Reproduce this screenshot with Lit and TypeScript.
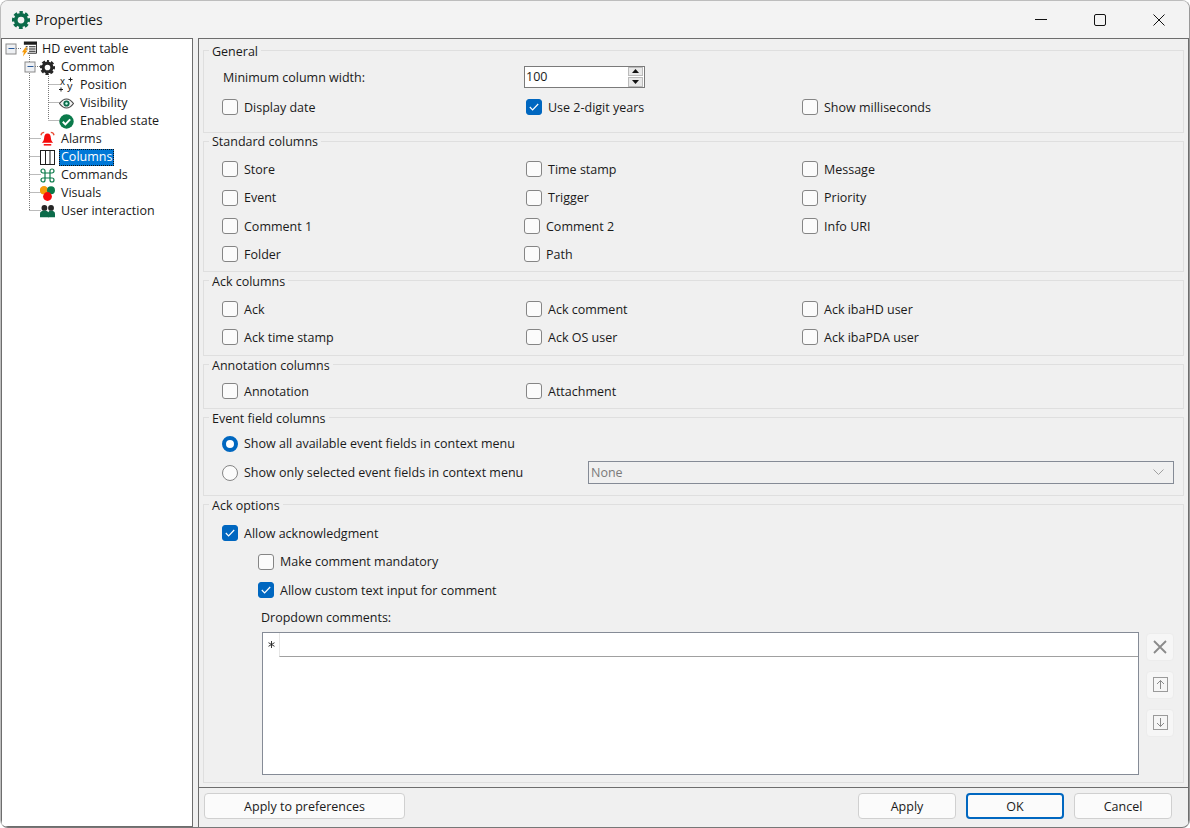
import { LitElement, html, css, svg } from "lit";
import { customElement } from "lit/decorators.js";

const gear = (c: string, s: number) => html`<svg width=${s} height=${s} viewBox="0 0 24 24"><circle cx="12" cy="12" r="10" fill="none" stroke=${c} stroke-width="4" stroke-dasharray="4.8 3.054" stroke-dashoffset="2.400" transform="rotate(-90 12 12)"/><circle cx="12" cy="12" r="7" fill="none" stroke=${c} stroke-width="5"/></svg>`;

const icons: Record<string, unknown> = {
  table: html`<svg width="16" height="16" viewBox="0 0 16 16"><path d="M2 0h14v3.500H2z" fill="#1e1e1e"/><path d="M15.500 3v9.500H6" fill="none" stroke="#1e1e1e"/><path d="M4 5.500h2M7.500 5.500h7M4 8h2M7.500 8h7M7.500 10.500h7" stroke="#1e1e1e" stroke-width="1.100"/><path d="M3.500 6.500 0 11.500h2L1 16l5-6.500H3.800L5.500 6.500z" fill="#f59b0b"/></svg>`,
  gear: gear("#262626", 15),
  pos: html`<svg width="15" height="17" viewBox="0 0 15 17"><text x="1" y="8" font-family="Liberation Sans" font-size="10" fill="#1e1e1e">x</text><text x="8" y="13" font-family="Liberation Sans" font-size="11" fill="#1e1e1e">y</text><path d="M9.500 2.500h4M11.500.5v4M0 12.500h4M2 10.500v4" stroke="#1e1e1e"/></svg>`,
  eye: html`<svg width="15" height="11" viewBox="0 0 15 11"><path d="M.5 5.500C3 2 5 1 7.500 1S12 2 14.500 5.500C12 9 10 10 7.500 10S3 9 .5 5.500z" fill="#f4f4f4" stroke="#4a4a4a" stroke-width="1.200"/><circle cx="7.500" cy="5.500" r="3.100" fill="#0b6b4a"/><circle cx="7.500" cy="5.500" r="1.200" fill="#cfe"/></svg>`,
  ok: html`<svg width="15" height="15" viewBox="0 0 15 15"><circle cx="7.500" cy="7.500" r="7.200" fill="#0b7a4b"/><path d="M3.800 7.800l2.600 2.600 4.800-5" fill="none" stroke="#fff" stroke-width="2"/></svg>`,
  alarm: html`<svg width="16" height="16" viewBox="0 0 16 16"><path d="M8 2c2.600 0 3.400 2.200 3.600 4.800.2 2.200 1 3.600 2.400 5.200H2c1.400-1.600 2.200-3 2.400-5.200C4.600 4.200 5.400 2 8 2z" fill="#f50a0a"/><rect x="4" y="13.400" width="8" height="1.600" fill="#f50a0a"/><path d="M4.500 1C3 1 1.500 2 1 4M11.500 1c1.500 0 3 1 3.500 3" fill="none" stroke="#e8503a" stroke-width="1.400"/></svg>`,
  cols: html`<svg width="15" height="15" viewBox="0 0 15 15"><rect x=".5" y=".5" width="14" height="14" fill="#fff" stroke="#1e1e1e"/><path d="M5.500 .5V14.500M10 .5V14.500" stroke="#1e1e1e"/></svg>`,
  cmd: html`<svg width="15" height="15" viewBox="0 0 15 15"><path d="M5 5h5v5H5zM5 5H3a2 2 0 1 1 2-2zM10 5V3a2 2 0 1 1 2 2zM10 10h2a2 2 0 1 1-2 2zM5 10v2a2 2 0 1 1-2-2z" fill="none" stroke="#0b7a4b" stroke-width="1.200"/></svg>`,
  vis: html`<svg width="15" height="15" viewBox="0 0 15 15"><circle cx="4" cy="4.300" r="4.200" fill="#f59b0b"/><circle cx="11" cy="4.300" r="4" fill="#0b7a4b"/><circle cx="7.500" cy="10.500" r="4.400" fill="#f50a0a"/></svg>`,
  users: html`<svg width="17" height="14" viewBox="0 0 17 14"><circle cx="5" cy="3.500" r="3.300" fill="#262626"/><path d="M0 14V10c0-2 2-3.500 5-3.500S10 8 10 10v4z" fill="#0b6b4a"/><circle cx="12.500" cy="3.500" r="3.300" fill="#262626"/><path d="M9 14V9c1-1.500 2-2.500 3.500-2.500C15 6.500 17 8 17 10v4z" fill="#0b6b4a"/></svg>`,
};

@customElement("app-root")
export class AppRoot extends LitElement {
  static styles = css`
    :host { display: block; width: 1190px; height: 828px; background: #fff; font-family: "Open Sans", "Noto Sans", sans-serif; font-size: 12.5px; color: #1a1a1a; overflow: hidden; }
    * { box-sizing: border-box; }
    .window { width: 1190px; height: 828px; background: #f0f0f0; border: 1px solid #bdbdbd; border-bottom-color: #777; border-right-color: #999; border-radius: 8px; overflow: hidden; display: flex; flex-direction: column; }
    .title { height: 37px; flex: none; display: flex; align-items: center; padding-left: 11px; background: #f3f3f3; }
    .title-text { margin-left: 5px; font-size: 14px; }
    .wbtns { margin-left: auto; display: flex; margin-right: 1px; }
    .wbtn { width: 59px; height: 37px; display: flex; align-items: center; justify-content: center; }
    .body { flex: 1; display: flex; min-height: 0; gap: 5px; }
    .tree { width: 192px; flex: none; background: #fff; border: 1px solid #6d6d6d; position: relative; padding-top: 1px; }
    .tree-lines { position: absolute; left: -2px; top: -39px; pointer-events: none; }
    .row { height: 18px; display: flex; align-items: center; gap: 5px; position: relative; }
    .l0 { padding-left: 20px; }
    .l1 { padding-left: 38px; gap: 6px; }
    .l2 { padding-left: 57px; gap: 6px; }
    .ico { width: 15px; display: flex; justify-content: center; flex: none; }
    .lbl { padding: 0 2px; height: 17px; line-height: 16px; white-space: nowrap; margin-left: -2px; }
    .sel { background: #0078d7; color: #fff; outline: 1px dotted #111; outline-offset: -1px; }
    .panel { flex: 1; display: flex; flex-direction: column; border: 1px solid #6d6d6d; border-bottom: none; min-width: 0; }
    .content { height: 748px; flex: none; padding: 11px 4px 0 4px; display: flex; flex-direction: column; gap: 8px; }
    .group { border: 1px solid #dfdfdf; position: relative; flex: none; }
    .legend { position: absolute; left: 5px; top: -8px; background: #f0f0f0; padding: 0 3px; height: 17px; line-height: 17px; white-space: nowrap; }
    .g1 { height: 83px; padding-top: 12px; }
    .g2 { height: 131px; padding-top: 13px; }
    .g2 .legend { top: -9px; }
    .g3 { height: 76px; padding-top: 14px; }
    .g4 { height: 45px; padding-top: 12px; }
    .g5 { height: 79px; padding-top: 11px; }
    .g6 { height: 279px; padding-top: 14px; }
    .cols { display: grid; grid-template-columns: 304px 276px 1fr; padding-left: 18px; grid-auto-rows: 28px; }
    .g1 .cols { grid-template-rows: 29px 30px; }
    .g2 .cols { grid-template-rows: 28px 29px 28px 28px; }
    .opt { display: flex; align-items: center; gap: 6px; white-space: nowrap; }
    .shift { margin-left: -2px; }
    .cb { width: 16px; height: 16px; flex: none; border: 1px solid #858585; border-radius: 3px; background: #fbfbfb; display: flex; align-items: center; justify-content: center; }
    .cb.on { background: #0067c0; border-color: #0067c0; }
    .rd { width: 16px; height: 16px; flex: none; border: 1px solid #858585; border-radius: 50%; background: #fbfbfb; }
    .rd.on { border: 4.500px solid #0067c0; background: #fff; }
    .min-lbl { padding-left: 1px; white-space: nowrap; display: flex; align-items: center; }
    .spin { width: 121px; height: 22px; background: #fff; border: 1px solid #7a7a7a; display: flex; align-items: center; padding-left: 1px; justify-self: start; align-self: center; margin: 0 0 2px -2px; justify-content: space-between; }
    .arrows { width: 15px; height: 20px; display: flex; flex-direction: column; gap: 1px; margin-right: 1px; }
    .arrow { flex: 1; background: #e8e8e8; border: 1px solid #bbb; display: flex; align-items: center; justify-content: center; }
    .radio-row { height: 29px; display: flex; align-items: center; padding-left: 18px; }
    .radio-row .opt { width: 366px; }
    .combo { width: 586px; height: 23px; background: #f0f0f0; border: 1px solid #858b96; display: flex; align-items: center; padding: 0 9px 0 2px; color: #7a7a7a; justify-content: space-between; margin-bottom: 1px; }
    .ack-row { height: 28.500px; display: flex; align-items: center; padding-left: 18px; }
    .ack-row.sub { padding-left: 54px; }
    .dd-label { height: 26px; display: flex; align-items: center; padding-left: 57px; }
    .dd-wrap { display: flex; padding-left: 58px; gap: 7px; margin-top: 1px; }
    .grid { width: 877px; height: 143px; background: #fff; border: 1px solid #858b96; }
    .grid-head { height: 24px; display: flex; }
    .star { width: 16px; background: #fff; display: flex; align-items: center; justify-content: center; }
    .cell { flex: 1; border-left: 1px solid #e6e6e6; border-bottom: 1px solid #a0a0a0; }
    .side { display: flex; flex-direction: column; gap: 10px; padding-top: 1px; }
    .sbtn { width: 28px; height: 28px; background: #f6f6f6; border: 1px solid #ececec; border-radius: 4px; display: flex; align-items: center; justify-content: center; }
    .sep { height: 1px; flex: none; background: #6d6d6d; }
    .bar { flex: 1; display: flex; align-items: flex-start; padding: 5px 16px 0 5px; gap: 10px; }
    .btn { width: 98px; height: 26px; background: #fbfbfb; border: 1px solid #d0d0d0; border-radius: 4px; display: flex; align-items: center; justify-content: center; }
    .btn.wide { width: 201px; margin-right: auto; }
    .btn.def { border: 2px solid #0067c0; }
  `;

  private row(level: number, icon: string, label: string, sel = false) {
    return html`<div class="row l${level}"><span class="ico">${icons[icon]}</span><span class="lbl ${sel ? "sel" : ""}">${label}</span></div>`;
  }

  private check(label: string, on = false, shift = false) {
    return html`<label class="opt ${shift ? "shift" : ""}"><span class="cb ${on ? "on" : ""}">${on ? html`<svg width="10" height="8" viewBox="0 0 10 8"><path d="M.8 4l2.800 2.800L9.200 1" fill="none" stroke="#fff" stroke-width="1.200"/></svg>` : ""}</span>${label}</label>`;
  }

  private radio(label: string, on = false) {
    return html`<label class="opt"><span class="rd ${on ? "on" : ""}"></span>${label}</label>`;
  }

  private expander(x: number, y: number) {
    return svg`<rect x=${x - 4.5} y=${y - 4.5} width="10" height="10" fill="#eef0f3" stroke="#8a8a8a"/><path d="M${x - 2} ${y}h6" stroke="#2a5a9a"/>`;
  }

  render() {
    return html`<div class="window">
      <div class="title">
        ${gear("#0b6b4a", 18)}
        <span class="title-text">Properties</span>
        <div class="wbtns">
          <span class="wbtn"><svg width="12" height="2"><path d="M0 .5h12" stroke="#111"/></svg></span>
          <span class="wbtn"><svg width="12" height="12"><rect x=".5" y=".5" width="11" height="11" rx="1.500" fill="none" stroke="#111"/></svg></span>
          <span class="wbtn"><svg width="12" height="12"><path d="M.5.5l11 11M11.500.5l-11 11" stroke="#111"/></svg></span>
        </div>
      </div>
      <div class="body">
        <div class="tree">
          <svg class="tree-lines" width="190" height="230">
            <path d="M16 48.500h6M29.500 55v155M29.500 138.500h11M29.500 156.500h11M29.500 174.500h11M29.500 192.500h11M29.500 210.500h11M35 66.500h5M48.500 74v46M48.500 84.500h11M48.500 102.500h11M48.500 120.500h11" stroke="#777" stroke-dasharray="1 1" fill="none"/>
            ${this.expander(10.5, 48.5)}
            ${this.expander(29.5, 66.5)}
          </svg>
          ${this.row(0, "table", "HD event table")}
          ${this.row(1, "gear", "Common")}
          ${this.row(2, "pos", "Position")}
          ${this.row(2, "eye", "Visibility")}
          ${this.row(2, "ok", "Enabled state")}
          ${this.row(1, "alarm", "Alarms")}
          ${this.row(1, "cols", "Columns", true)}
          ${this.row(1, "cmd", "Commands")}
          ${this.row(1, "vis", "Visuals")}
          ${this.row(1, "users", "User interaction")}
        </div>
        <div class="panel">
          <div class="content">
            <div class="group g1">
              <span class="legend">General</span>
              <div class="cols">
                <span class="min-lbl">Minimum column width:</span>
                <div class="spin" style="grid-column: 2 / 4">100
                  <span class="arrows">
                    <span class="arrow"><svg width="7" height="4"><path d="M3.500 0 7 4H0z" fill="#111"/></svg></span>
                    <span class="arrow"><svg width="7" height="4"><path d="M0 0h7L3.500 4z" fill="#111"/></svg></span>
                  </span>
                </div>
                ${this.check("Display date")}
                ${this.check("Use 2-digit years", true)}
                ${this.check("Show milliseconds")}
              </div>
            </div>
            <div class="group g2">
              <span class="legend">Standard columns</span>
              <div class="cols">
                ${this.check("Store")}${this.check("Time stamp")}${this.check("Message")}
                ${this.check("Event")}${this.check("Trigger")}${this.check("Priority")}
                ${this.check("Comment 1")}${this.check("Comment 2", false, true)}${this.check("Info URI")}
                ${this.check("Folder")}${this.check("Path", false, true)}
              </div>
            </div>
            <div class="group g3">
              <span class="legend">Ack columns</span>
              <div class="cols">
                ${this.check("Ack")}${this.check("Ack comment")}${this.check("Ack ibaHD user")}
                ${this.check("Ack time stamp")}${this.check("Ack OS user")}${this.check("Ack ibaPDA user")}
              </div>
            </div>
            <div class="group g4">
              <span class="legend">Annotation columns</span>
              <div class="cols">
                ${this.check("Annotation")}${this.check("Attachment")}
              </div>
            </div>
            <div class="group g5">
              <span class="legend">Event field columns</span>
              <div class="radio-row">${this.radio("Show all available event fields in context menu", true)}</div>
              <div class="radio-row">
                ${this.radio("Show only selected event fields in context menu")}
                <div class="combo">None<svg width="11" height="6"><path d="M.5.5l5 5 5-5" fill="none" stroke="#a0a0a0"/></svg></div>
              </div>
            </div>
            <div class="group g6">
              <span class="legend">Ack options</span>
              <div class="ack-row">${this.check("Allow acknowledgment", true)}</div>
              <div class="ack-row sub">${this.check("Make comment mandatory")}</div>
              <div class="ack-row sub">${this.check("Allow custom text input for comment", true)}</div>
              <div class="dd-label">Dropdown comments:</div>
              <div class="dd-wrap">
                <div class="grid"><div class="grid-head"><span class="star"><svg width="7" height="7" viewBox="0 0 7 7"><path d="M3.500 0v7M.5 1.700l6 3.600M6.500 1.700l-6 3.600" stroke="#222" stroke-width=".9"/></svg></span><span class="cell"></span></div></div>
                <div class="side">
                  <span class="sbtn"><svg width="14" height="14"><path d="M1 1l12 12M13 1 1 13" stroke="#8a8a8a" stroke-width="1.800"/></svg></span>
                  <span class="sbtn"><svg width="15" height="15"><rect x=".5" y=".5" width="14" height="14" fill="none" stroke="#9a9a9a"/><path d="M7.500 12V3.500M4 7l3.500-3.500L11 7" fill="none" stroke="#8a8a8a"/></svg></span>
                  <span class="sbtn"><svg width="15" height="15"><rect x=".5" y=".5" width="14" height="14" fill="none" stroke="#9a9a9a"/><path d="M7.500 3v8.500M4 8l3.500 3.500L11 8" fill="none" stroke="#8a8a8a"/></svg></span>
                </div>
              </div>
            </div>
          </div>
          <div class="sep"></div>
          <div class="bar">
            <span class="btn wide">Apply to preferences</span>
            <span class="btn">Apply</span>
            <span class="btn def">OK</span>
            <span class="btn">Cancel</span>
          </div>
        </div>
      </div>
    </div>`;
  }
}
